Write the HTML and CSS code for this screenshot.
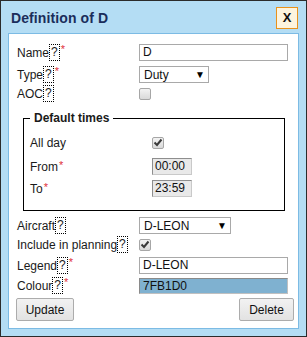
FILE: index.html
```html
<!DOCTYPE html>
<html>
<head>
<meta charset="utf-8">
<link rel="stylesheet" href="styles.css">
</head>
<body>
<div class="dialog">
  <div class="header">
    <span class="title">Definition of D</span>
    <span class="close">X</span>
  </div>
  <div class="panel">
    <div class="row">
      <span class="label">Name<span class="help">?</span><span class="req">*</span></span>
      <span class="input wide">D</span>
    </div>
    <div class="row">
      <span class="label">Type<span class="help">?</span><span class="req">*</span></span>
      <span class="select type"><span>Duty</span><span class="arrow">▼</span></span>
    </div>
    <div class="row short">
      <span class="label">AOC<span class="help">?</span></span>
      <span class="check"></span>
    </div>
    <fieldset class="times">
      <legend>Default times</legend>
      <div class="row short first">
        <span class="label">All day</span>
        <span class="check"><svg width="10" height="9" viewBox="0 0 10 9"><path d="M1.5 4.5 L4 7 L8.5 1.5" fill="none" stroke="#3a3a3a" stroke-width="2"/></svg></span>
      </div>
      <div class="row">
        <span class="label">From<span class="req">*</span></span>
        <span class="input time">00:00</span>
      </div>
      <div class="row">
        <span class="label">To<span class="req">*</span></span>
        <span class="input time">23:59</span>
      </div>
    </fieldset>
    <div class="row">
      <span class="label">Aircraft<span class="help">?</span></span>
      <span class="select aircraft"><span>D-LEON</span><span class="arrow">▼</span></span>
    </div>
    <div class="row short">
      <span class="label">Include in planning<span class="help">?</span></span>
      <span class="check"><svg width="10" height="9" viewBox="0 0 10 9"><path d="M1.5 4.5 L4 7 L8.5 1.5" fill="none" stroke="#3a3a3a" stroke-width="2"/></svg></span>
    </div>
    <div class="row legend-row">
      <span class="label">Legend<span class="help">?</span><span class="req">*</span></span>
      <span class="input wide">D-LEON</span>
    </div>
    <div class="row">
      <span class="label">Colour<span class="help">?</span><span class="req">*</span></span>
      <span class="input wide colour">7FB1D0</span>
    </div>
    <div class="buttons">
      <span class="btn update">Update</span>
      <span class="btn delete">Delete</span>
    </div>
  </div>
</div>
</body>
</html>
```
FILE: styles.css
```css
html, body {
  margin: 0;
  padding: 0;
  background: #ffffff;
}
body {
  font-family: "Liberation Sans", Arial, sans-serif;
  font-size: 12px;
  color: #1a1a1a;
}
.dialog {
  width: 307px;
  height: 337px;
  box-sizing: border-box;
  border: 1px solid #2b2b2b;
  background: #b4ddf4;
  padding: 0 7px 7px 7px;
  display: flex;
  flex-direction: column;
}
.header {
  height: 32px;
  display: flex;
  align-items: center;
  justify-content: space-between;
  padding: 0 0 0 3px;
  flex: none;
}
.title {
  font-size: 14px;
  font-weight: bold;
  color: #1b2d5b;
  margin-top: 2px;
  letter-spacing: 0.1px;
}
.close {
  width: 22px;
  height: 22px;
  box-sizing: border-box;
  border: 1px solid #e8921c;
  background: #fdf4de;
  color: #111;
  font-weight: bold;
  font-size: 13px;
  display: flex;
  align-items: center;
  justify-content: center;
  margin-top: 1px;
  margin-right: 1px;
}
.panel {
  flex: 1;
  background: #fff;
  border: 1px solid #7cbbe4;
  padding: 9px 10px 0 8px;
}
.row {
  display: flex;
  align-items: center;
  height: 19px;
  margin-bottom: 3px;
}
.row.short {
  height: 13px;
  margin-bottom: 5px;
}
.label {
  width: 122px;
  flex: none;
  display: flex;
  align-items: center;
  color: #1a1a1a;
}
.help {
  display: inline-block;
  border: 1px dotted #000;
  padding: 0 1px;
  line-height: 15px;
  height: 15px;
}
.req {
  color: #e0303a;
  font-size: 11px;
  align-self: flex-start;
  margin-left: 1px;
  margin-top: -1px;
}
.input {
  box-sizing: border-box;
  height: 17px;
  border: 1px solid #a9a9a9;
  padding: 0 3px;
  line-height: 15px;
  background: #fff;
  color: #111;
}
.input.wide {
  width: 150px;
}
.input.time {
  width: 40px;
  background: #e9e9e9;
  border-color: #8e8e8e #c9c9c9 #c9c9c9 #8e8e8e;
  padding: 0 2px;
}
.input.colour {
  background: #7fb1d0;
  border-color: #8a8a8a #c0c0c0 #c0c0c0 #8a8a8a;
  height: 16px;
}
.select {
  box-sizing: border-box;
  height: 17px;
  border: 1px solid #a9a9a9;
  background: #fff;
  display: flex;
  align-items: center;
  justify-content: space-between;
  padding: 0 3px 0 4px;
  color: #111;
}
.select.type { width: 70px; }
.select.aircraft { width: 92px; }
.arrow {
  font-size: 10px;
  color: #000;
}
.check {
  box-sizing: border-box;
  width: 12px;
  height: 12px;
  border: 1px solid #a6a6a6;
  border-radius: 2px;
  background: linear-gradient(#f3f3f3, #d9d9d9);
  display: flex;
  align-items: center;
  justify-content: center;
}
.times {
  margin: 11px 3px 5px 6px;
  padding: 0 6px 12px 6px;
  border: 1px solid #000;
}
.times legend {
  font-weight: bold;
  padding: 0 4px;
  color: #1a1a1a;
}
.times .row.first {
  margin-top: 11px;
  margin-bottom: 8px;
}
.times .row:last-child {
  margin-bottom: 0;
}
.row.legend-row {
  margin-bottom: 1px;
}
.buttons {
  display: flex;
  justify-content: space-between;
  margin: 0 -6px 0 -1px;
}
.btn {
  box-sizing: border-box;
  height: 23px;
  border: 1px solid #acacac;
  border-radius: 2px;
  background: linear-gradient(#f2f2f2, #e2e2e2);
  display: flex;
  align-items: center;
  justify-content: center;
  color: #111;
}
.btn.update { width: 58px; }
.btn.delete { width: 55px; }
```
